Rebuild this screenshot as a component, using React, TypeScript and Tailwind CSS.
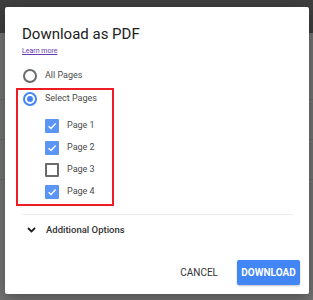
import { FC } from 'react';

const Radio: FC<{ checked?: boolean }> = ({ checked = false }) => (
  <span
    className={
      checked
        ? 'flex h-[14px] w-[14px] items-center justify-center rounded-full border-2 border-[#4285f4]'
        : 'flex h-[14px] w-[14px] items-center justify-center rounded-full border-2 border-[#6b6b6b]'
    }
  >
    {checked && <span className="h-[6px] w-[6px] rounded-full bg-[#4285f4]" />}
  </span>
);

const Checkbox: FC<{ checked?: boolean }> = ({ checked = false }) =>
  checked ? (
    <span className="flex h-[14px] w-[14px] items-center justify-center rounded-[1px] bg-[#5b95f5]">
      <svg width="10" height="10" viewBox="0 0 10 10" fill="none">
        <path d="M1.6 5.2 L4 7.4 L8.6 2.6" stroke="white" strokeWidth="1.4" />
      </svg>
    </span>
  ) : (
    <span className="h-[14px] w-[14px] rounded-[1px] border-2 border-[#6b6b6b]" />
  );

const pages = [
  { label: 'Page 1', checked: true },
  { label: 'Page 2', checked: true },
  { label: 'Page 3', checked: false },
  { label: 'Page 4', checked: true },
];

export default function App() {
  return (
    <div className="relative h-[300px] w-[313px] overflow-hidden bg-[#747474] font-['Roboto',sans-serif]">
      {/* page behind the overlay */}
      <div className="h-[33px] bg-[#3f3f3f]" />
      <div className="flex flex-col">
        <div className="h-[67px] border-b border-[#6a6a6a]" />
        <div className="h-[40px] border-b border-[#6a6a6a]" />
        <div className="h-[40px] border-b border-[#6a6a6a]" />
      </div>

      {/* dialog */}
      <div className="absolute left-[5px] top-[7px] flex h-[287px] w-[304px] flex-col rounded-[2px] bg-white shadow-[0_4px_16px_rgba(0,0,0,0.35)]">
        <div className="flex flex-col pl-[17px] pr-[16px] pt-[18px]">
          <h1 className="text-[15px] leading-[18px] text-[#212121]">Download as PDF</h1>
          <a className="mt-[3px] self-start text-[7px] leading-[10px] text-[#6a3ab2] underline">Learn more</a>

          <div className="mt-[9px] flex h-[22px] items-center gap-[8px] pl-[1px] text-[9px] text-[#4a4a4a]">
            <Radio />
            <span>All Pages</span>
          </div>

          <div className="-ml-[6px] mt-[1px] flex w-[98px] flex-col border-2 border-[#ee1c25] pb-[1px] pl-[5px] text-[9px] text-[#4a4a4a]">
            <div className="flex h-[17px] items-center gap-[8px]">
              <Radio checked />
              <span>Select Pages</span>
            </div>
            <div className="mt-[8px] flex flex-col pl-[22px]">
              {pages.map((p) => (
                <div key={p.label} className="flex h-[22px] items-center gap-[8px]">
                  <Checkbox checked={p.checked} />
                  <span>{p.label}</span>
                </div>
              ))}
            </div>
          </div>

          <div className="mt-[8px] h-px bg-[#ececec]" />

          <div className="mt-[4px] flex h-[22px] items-center gap-[10px] pl-[5px]">
            <svg width="9" height="6" viewBox="0 0 9 6" fill="none">
              <path d="M1 1 L4.5 4.5 L8 1" stroke="#222" strokeWidth="1.8" />
            </svg>
            <span className="text-[9.5px] font-medium text-[#333]">Additional Options</span>
          </div>
        </div>

        <div className="mt-auto flex items-center justify-end gap-[10px] pb-[8px] pr-[9px]">
          <button className="px-[9px] py-[6px] text-[10px] text-[#333]">CANCEL</button>
          <button className="h-[25px] w-[63px] rounded-[2px] bg-[#4285f4] text-[10px] font-bold text-white shadow-[0_1px_2px_rgba(0,0,0,0.25)]">
            DOWNLOAD
          </button>
        </div>
      </div>
    </div>
  );
}
